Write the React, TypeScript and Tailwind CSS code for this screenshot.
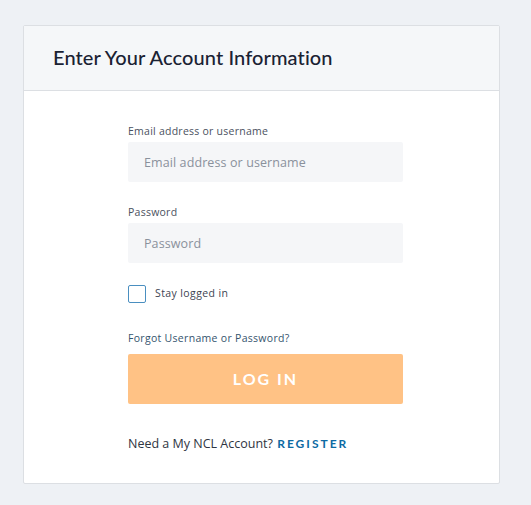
export default function App() {
  return (
    <div className="min-h-screen w-full bg-[#eef1f5] pt-[25px] pl-[23px]" style={{ fontFamily: '"Open Sans", sans-serif' }}>
      <div className="w-[477px] h-[459px] bg-white border border-[#dcdfe3] rounded-[2px] flex flex-col">
        <header className="h-[65px] bg-[#f5f7f9] border-b border-[#dcdfe3] flex items-center pl-[29px] pb-[2px]">
          <h1 className="text-[20px] text-[#1a2233] font-medium tracking-[0.1px]" style={{ fontFamily: 'Lato, sans-serif' }}>
            Enter Your Account Information
          </h1>
        </header>

        <form className="ml-[104px] w-[275px] pt-[33px] flex flex-col" onSubmit={(e) => e.preventDefault()}>
          <label className="text-[10.5px] text-[#4a5160] leading-[14px] tracking-[0.25px]">Email address or username</label>
          <input
            className="mt-[4px] h-[40px] w-full bg-[#f5f6f8] rounded-[2px] px-[16px] text-[12.5px] tracking-[0.1px] placeholder:text-[#8a919c] outline-none"
            placeholder="Email address or username"
          />

          <label className="mt-[23px] text-[10.5px] text-[#4a5160] leading-[14px] tracking-[0.25px]">Password</label>
          <input
            type="password"
            className="mt-[4px] h-[40px] w-full bg-[#f5f6f8] rounded-[2px] px-[16px] text-[12.5px] tracking-[0.1px] placeholder:text-[#8a919c] outline-none"
            placeholder="Password"
          />

          <label className="mt-[22px] flex items-center gap-[9px]">
            <span className="w-[18px] h-[18px] border border-[#4a8fc0] rounded-[2px] bg-white" />
            <span className="text-[10.5px] text-[#3d4452] tracking-[0.4px]">Stay logged in</span>
          </label>

          <a className="mt-[28px] text-[10.5px] text-[#35546e] leading-[14px] tracking-[0.3px]">Forgot Username or Password?</a>

          <button
            type="submit"
            className="mt-[9px] h-[50px] w-full bg-[#ffc285] rounded-[2px] text-white text-[16px] font-bold tracking-[2px]"
            style={{ fontFamily: 'Lato, sans-serif' }}
          >
            LOG IN
          </button>

          <p className="mt-[31px] text-[12.5px] text-[#2f3542]">
            Need a My NCL Account?{' '}
            <a className="ml-[1px] text-[#0d6aa3] font-bold tracking-[2px] text-[12px]" style={{ fontFamily: 'Lato, sans-serif' }}>
              REGISTER
            </a>
          </p>
        </form>
      </div>
    </div>
  );
}
